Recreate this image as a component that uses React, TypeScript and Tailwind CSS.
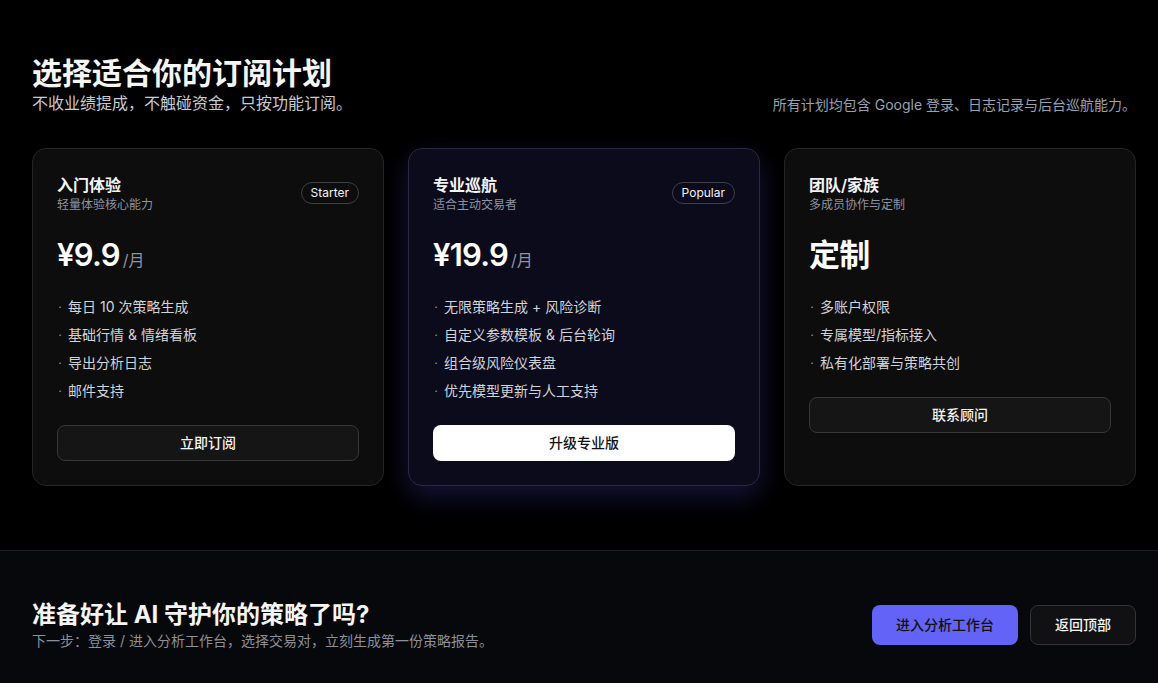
import React from "react";

interface Plan {
    name: string;
    desc: string;
    badge?: string;
    price: string;
    unit?: string;
    features: string[];
    cta: string;
    featured?: boolean;
}

const plans: Plan[] = [
    {
        name: "入门体验",
        desc: "轻量体验核心能力",
        badge: "Starter",
        price: "¥9.9",
        unit: "/月",
        features: ["每日 10 次策略生成", "基础行情 & 情绪看板", "导出分析日志", "邮件支持"],
        cta: "立即订阅",
    },
    {
        name: "专业巡航",
        desc: "适合主动交易者",
        badge: "Popular",
        price: "¥19.9",
        unit: "/月",
        features: ["无限策略生成 + 风险诊断", "自定义参数模板 & 后台轮询", "组合级风险仪表盘", "优先模型更新与人工支持"],
        cta: "升级专业版",
        featured: true,
    },
    {
        name: "团队/家族",
        desc: "多成员协作与定制",
        price: "定制",
        features: ["多账户权限", "专属模型/指标接入", "私有化部署与策略共创"],
        cta: "联系顾问",
    },
];

function PlanCard({ plan }: { plan: Plan }) {
    return (
        <div
            className={`flex flex-col rounded-[14px] border p-6 ${
                plan.featured
                    ? "border-[#2a2942] bg-[#0b0b1c] shadow-[0_10px_26px_rgba(76,70,200,0.28)]"
                    : "border-[#262626] bg-[#0d0d0d]"
            }`}
        >
            <div className="flex items-start justify-between">
                <div>
                    <h3 className="text-base font-semibold leading-6 text-[#f3f4f6]">{plan.name}</h3>
                    <p className="text-xs leading-4 text-[#8d94a3]">{plan.desc}</p>
                </div>
                {plan.badge && (
                    <span className="mt-[9px] rounded-full border border-[#3f3f46] px-[9px] py-[2px] text-xs leading-4 text-[#f3f4f6]">
                        {plan.badge}
                    </span>
                )}
            </div>

            <div className="mt-[22px] flex items-baseline">
                <span className="text-[31px] font-semibold leading-10 tracking-tight text-white">{plan.price}</span>
                {plan.unit && <span className="ml-[3px] text-base text-[#8d94a3]">{plan.unit}</span>}
            </div>

            <ul className="mt-[22px] flex flex-col gap-2">
                {plan.features.map((f) => (
                    <li key={f} className="flex items-center gap-[5px] text-sm leading-5 text-[#d0d3d9]">
                        <span className="w-[6px] text-center text-[11px] text-[#9aa0ab]">·</span>
                        <span>{f}</span>
                    </li>
                ))}
            </ul>

            <button
                className={`mt-6 h-9 w-full rounded-lg text-sm font-medium ${
                    plan.featured
                        ? "bg-white text-[#111]"
                        : "border border-[#363636] bg-[#151515] text-[#f3f4f6]"
                }`}
            >
                {plan.cta}
            </button>
        </div>
    );
}

export default function App() {
    return (
        <div
            className="min-h-screen bg-black text-white"
            style={{ fontFamily: 'Inter, "Noto Sans CJK SC", sans-serif' }}
        >
            {/* Pricing */}
            <section className="pl-8 pr-[22px] pt-[55px] pb-16">
                <div className="flex items-end justify-between">
                    <div>
                        <h1 className="text-[30px] font-bold leading-9 text-[#f5f5f5]">选择适合你的订阅计划</h1>
                        <p className="text-base leading-6 text-[#c9cbd0]">不收业绩提成，不触碰资金，只按功能订阅。</p>
                    </div>
                    <p className="text-sm leading-5 text-[#9aa2b1]">
                        所有计划均包含 Google 登录、日志记录与后台巡航能力。
                    </p>
                </div>

                <div className="mt-[33px] grid grid-cols-3 gap-6">
                    {plans.map((p) => (
                        <PlanCard key={p.name} plan={p} />
                    ))}
                </div>
            </section>

            {/* CTA */}
            <section className="border-t border-[#1f1f22] bg-[#07080b] pl-8 pr-[22px] pt-12 pb-10">
                <div className="flex items-center justify-between">
                    <div>
                        <h2 className="text-2xl font-bold leading-8 text-[#f5f5f5]">准备好让 AI 守护你的策略了吗?</h2>
                        <p className="text-sm leading-5 text-[#8b909b]">
                            下一步：登录 / 进入分析工作台，选择交易对，立刻生成第一份策略报告。
                        </p>
                    </div>
                    <div className="flex gap-3">
                        <button className="h-10 w-[146px] rounded-lg bg-[#6363f7] text-sm font-medium text-[#111]">
                            进入分析工作台
                        </button>
                        <button className="h-10 w-[106px] rounded-lg border border-[#333338] bg-[#111113] text-sm font-medium text-[#f3f4f6]">
                            返回顶部
                        </button>
                    </div>
                </div>
            </section>
        </div>
    );
}
